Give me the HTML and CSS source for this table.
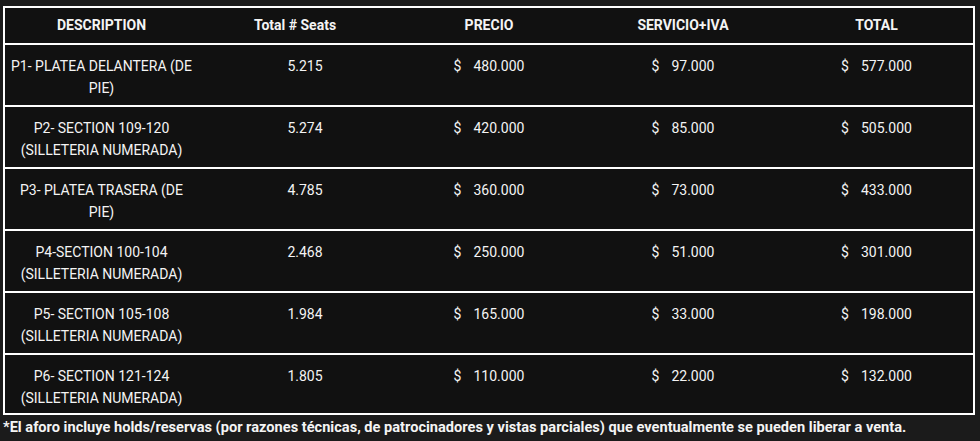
FILE: index.html
```html
<!DOCTYPE html>
<html lang="es">
<head>
<meta charset="utf-8">
<title>Precios</title>
<link rel="stylesheet" href="styles.css">
</head>
<body>
<div class="page">
  <table class="prices">
    <thead>
      <tr>
        <th class="c-desc">DESCRIPTION</th>
        <th class="c-seats">Total # Seats</th>
        <th>PRECIO</th>
        <th>SERVICIO+IVA</th>
        <th>TOTAL</th>
      </tr>
    </thead>
    <tbody>
      <tr>
        <td class="c-desc">P1- PLATEA DELANTERA (DE<br>PIE)</td>
        <td class="c-seats">5.215</td>
        <td><span class="cur">$</span>480.000</td>
        <td><span class="cur">$</span>97.000</td>
        <td><span class="cur">$</span>577.000</td>
      </tr>
      <tr>
        <td class="c-desc">P2- SECTION 109-120<br>(SILLETERIA NUMERADA)</td>
        <td class="c-seats">5.274</td>
        <td><span class="cur">$</span>420.000</td>
        <td><span class="cur">$</span>85.000</td>
        <td><span class="cur">$</span>505.000</td>
      </tr>
      <tr>
        <td class="c-desc">P3- PLATEA TRASERA (DE<br>PIE)</td>
        <td class="c-seats">4.785</td>
        <td><span class="cur">$</span>360.000</td>
        <td><span class="cur">$</span>73.000</td>
        <td><span class="cur">$</span>433.000</td>
      </tr>
      <tr>
        <td class="c-desc">P4-SECTION 100-104<br>(SILLETERIA NUMERADA)</td>
        <td class="c-seats">2.468</td>
        <td><span class="cur">$</span>250.000</td>
        <td><span class="cur">$</span>51.000</td>
        <td><span class="cur">$</span>301.000</td>
      </tr>
      <tr>
        <td class="c-desc">P5- SECTION 105-108<br>(SILLETERIA NUMERADA)</td>
        <td class="c-seats">1.984</td>
        <td><span class="cur">$</span>165.000</td>
        <td><span class="cur">$</span>33.000</td>
        <td><span class="cur">$</span>198.000</td>
      </tr>
      <tr class="last">
        <td class="c-desc">P6- SECTION 121-124<br>(SILLETERIA NUMERADA)</td>
        <td class="c-seats">1.805</td>
        <td><span class="cur">$</span>110.000</td>
        <td><span class="cur">$</span>22.000</td>
        <td><span class="cur">$</span>132.000</td>
      </tr>
    </tbody>
  </table>
  <p class="note">*El aforo incluye holds/reservas (por razones técnicas, de patrocinadores y vistas parciales) que eventualmente se pueden liberar a venta.</p>
</div>
</body>
</html>
```

FILE: styles.css
```css
html, body {
  margin: 0;
  padding: 0;
  background: #1b1b1b;
}

body {
  font-family: Roboto, "DejaVu Sans", sans-serif;
  color: #f4f4f4;
}

.page {
  padding: 6px 5px 0 3px;
}

.prices {
  width: 972px;
  border-collapse: collapse;
  table-layout: fixed;
  background: #111111;
  border: 2px solid #ffffff;
}

.prices tr {
  border-bottom: 2px solid #ffffff;
}

.prices th {
  height: 37px;
  box-sizing: border-box;
  padding: 0 0 1px;
  font-size: 14px;
  font-weight: 700;
  text-align: center;
  vertical-align: middle;
}

.prices td {
  height: 62px;
  padding: 10px 0 0;
  box-sizing: border-box;
  font-size: 14px;
  line-height: 22px;
  text-align: center;
  vertical-align: top;
}

.prices .last td {
  height: 60px;
}

.prices .c-desc {
  padding-left: 4px;
  padding-right: 4px;
}

.prices td.c-seats {
  padding-left: 20px;
}

.cur {
  margin-right: 12px;
}

.note {
  margin: 0;
  padding-top: 1px;
  font-size: 14.6px;
  line-height: 22px;
  font-weight: 700;
}
```
